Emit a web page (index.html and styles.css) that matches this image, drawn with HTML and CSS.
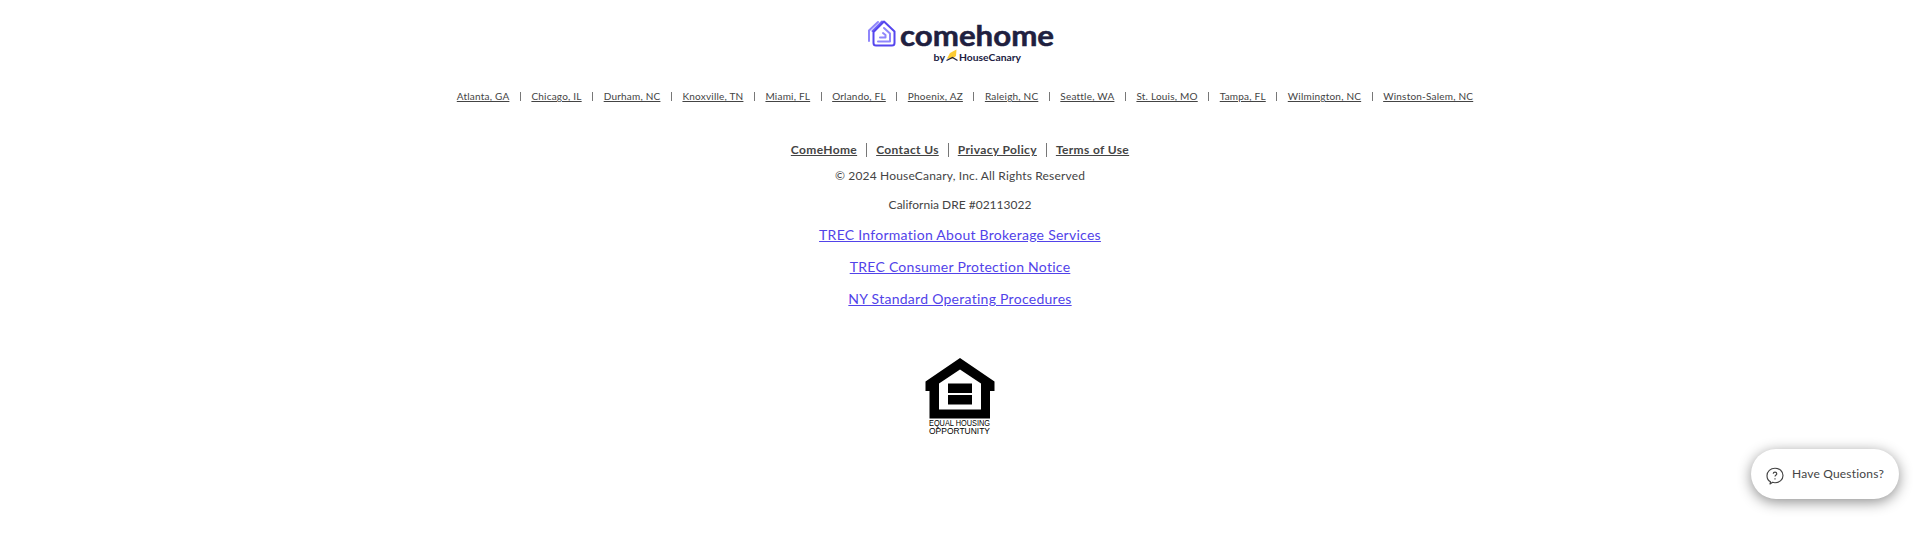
FILE: index.html
```html
<!DOCTYPE html>
<html lang="en">
<head>
<meta charset="utf-8">
<title>ComeHome</title>
<link rel="stylesheet" href="styles.css">
</head>
<body>
<footer class="footer">
  <svg class="logo" width="190" height="46" viewBox="0 0 190 46" role="img" aria-label="comehome by HouseCanary">
    <g fill="none" stroke-width="2" stroke-linecap="round" stroke-linejoin="round">
      <path stroke="#8f86fb" d="M1 22V11.500L10 3"/>
      <path stroke="#7468f7" d="M4.500 12L14 2.500"/>
      <path stroke="#5546ee" d="M5.500 13V24Q5.500 26.500 8 26.500H24Q26.500 26.500 26.500 24V12.500L16 2.500L5.500 13Z"/>
      <path stroke="#8f86fb" d="M10 22.500H22V14.500L16 9M12 18.500H17.500V16L15 14"/>
    </g>
    <text class="brand" x="32" y="26.500" textLength="154" lengthAdjust="spacingAndGlyphs">comehome</text>
    <text class="sub" x="65.500" y="41.500" textLength="11.500" lengthAdjust="spacingAndGlyphs">by</text>
    <path fill="#fccb35" d="M79 39.500L82 34L88.500 30.500L88 37L84 40Z"/>
    <path fill="none" stroke="#20203f" stroke-width="1.300" d="M78.500 41.500L84.500 38.500L89.500 41.500"/>
    <text class="sub" x="91" y="41.500" textLength="62" lengthAdjust="spacingAndGlyphs">HouseCanary</text>
  </svg>
  <ul class="cities">
    <li><a>Atlanta, GA</a></li><li><a>Chicago, IL</a></li><li><a>Durham, NC</a></li><li><a>Knoxville, TN</a></li><li><a>Miami, FL</a></li><li><a>Orlando, FL</a></li><li><a>Phoenix, AZ</a></li><li><a>Raleigh, NC</a></li><li><a>Seattle, WA</a></li><li><a>St. Louis, MO</a></li><li><a>Tampa, FL</a></li><li><a>Wilmington, NC</a></li><li><a>Winston-Salem, NC</a></li>
  </ul>
  <ul class="nav">
    <li><a>ComeHome</a></li><li><a>Contact Us</a></li><li><a>Privacy Policy</a></li><li><a>Terms of Use</a></li>
  </ul>
  <p class="note copy">© 2024 HouseCanary, Inc. All Rights Reserved</p>
  <p class="note">California DRE #02113022</p>
  <div class="legal">
    <a>TREC Information About Brokerage Services</a>
    <a>TREC Consumer Protection Notice</a>
    <a>NY Standard Operating Procedures</a>
  </div>
  <svg class="eho" width="70" height="77" viewBox="0 0 70 77" role="img" aria-label="Equal Housing Opportunity">
    <path fill-rule="evenodd" d="M35 0L69.500 23.500V33H65V60.500H4.500V33H0.500V23.500ZM35 11.500L14 25.500V51.500H56V25.500Z"/>
    <path d="M23 25.500H47V35H23ZM23 37H47V46.500H23Z"/>
    <text x="4" y="68" textLength="61" lengthAdjust="spacingAndGlyphs">EQUAL HOUSING</text>
    <text x="4" y="76" textLength="61" lengthAdjust="spacingAndGlyphs">OPPORTUNITY</text>
  </svg>
</footer>
<button class="help" type="button">
  <svg width="18" height="18" viewBox="0 0 18 18" fill="none" stroke="#444" stroke-width="1.150" stroke-linejoin="round">
    <path d="M4.500 14.800C2.300 13.600 1 11.200 1 8.700C1 4.300 4.500 1.200 9 1.200S17 4.300 17 8.500S13.500 15.700 9 15.700C8 15.700 7.300 15.600 6.600 15.300L4 17Z"/>
    <path d="M7.200 6.700Q7.300 5.100 9 5.100T10.800 6.700C10.800 8 9 8 9 9.600M9 11.200V12.400"/>
  </svg>
  <span>Have Questions?</span>
</button>
</body>
</html>
```
FILE: styles.css
```css
* { box-sizing: border-box; }
body {
  margin: 0;
  height: 555px;
  background: #fff;
  color: #444;
  font-family: Lato, "Liberation Sans", sans-serif;
  font-variant-ligatures: none;
}
.footer { display: flex; flex-direction: column; align-items: center; padding-top: 19px; }
.logo { display: block; margin-left: 6px; overflow: visible; }
.brand { font: 700 28px Lato, sans-serif; fill: #20203f; stroke: #20203f; stroke-width: .5px; }
.sub { font: 700 9.500px Lato, sans-serif; fill: #20203f; }
ul { display: flex; list-style: none; margin: 0; padding: 0; }
a { text-decoration: underline; }
li { display: flex; align-items: center; white-space: nowrap; }
li + li::before { content: ""; width: 1px; background: #777; }
.cities { margin: 22px 0 0 10px; font-size: 10px; line-height: 18px; letter-spacing: .21px; }
.cities li + li::before { height: 9px; margin: 0 10.500px; }
.nav { margin-top: 36px; font-size: 12px; line-height: 18px; font-weight: 700; letter-spacing: .36px; }
.nav li + li::before { height: 14px; margin: 0 9px; }
.note { margin: 0 0 11px; font-size: 12px; line-height: 18px; }
.copy { margin-top: 8px; letter-spacing: .17px; }
.legal { display: flex; flex-direction: column; align-items: center; color: #5243e9; font-size: 14px; line-height: 20px; gap: 12px; letter-spacing: .27px; }
.eho { display: block; margin-top: 49px; font: 8.800px "Liberation Sans", sans-serif; overflow: visible; }
.help {
  position: absolute;
  left: 1751px;
  top: 449px;
  width: 148px;
  height: 50px;
  display: flex;
  align-items: center;
  gap: 8px;
  padding: 0 14px 0 15px;
  border: 0;
  border-radius: 25px;
  background: #fff;
  color: #444;
  font: 12px/18px Lato, sans-serif;
  letter-spacing: .19px;
  box-shadow: 0 3px 14px rgba(0, 0, 0, .45);
  white-space: nowrap;
}
.help svg { flex: none; margin-top: 3px; }
.help span { margin-bottom: 1px; }
```
